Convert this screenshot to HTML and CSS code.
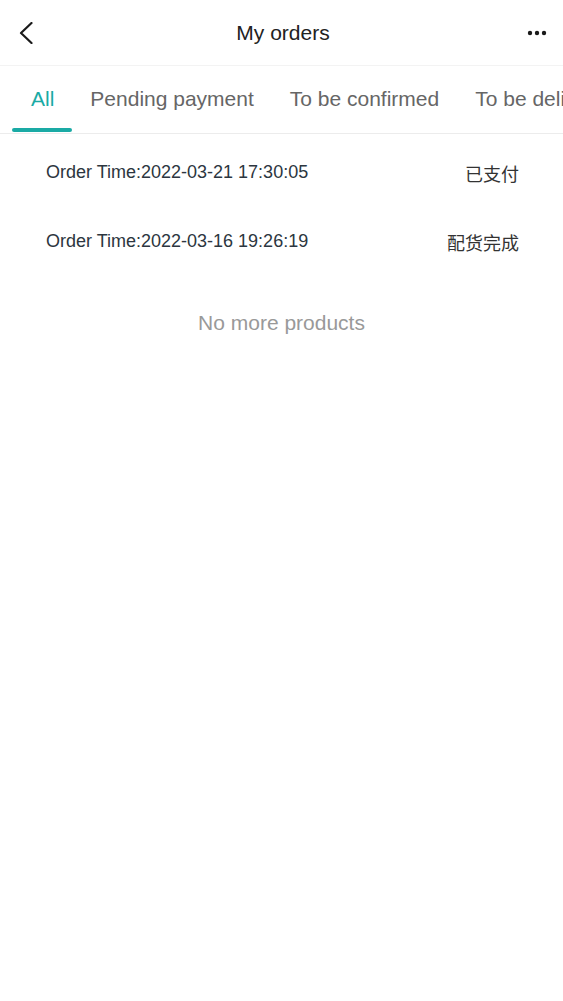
FILE: index.html
```html
<!DOCTYPE html>
<html lang="en">
<head>
<meta charset="utf-8">
<title>My orders</title>
<link rel="stylesheet" href="styles.css">
</head>
<body>
<div class="page">
  <header class="navbar">
    <button class="nav-btn back" aria-label="Back">
      <svg width="14" height="22" viewBox="0 0 14 22"><polyline points="12.5,1 2,11 12.5,21" fill="none" stroke="#1a1a1a" stroke-width="2.2" stroke-linecap="round" stroke-linejoin="round"/></svg>
    </button>
    <h1 class="nav-title">My orders</h1>
    <button class="nav-btn more" aria-label="More">
      <svg width="20" height="6" viewBox="0 0 20 6"><circle cx="3" cy="3" r="2.2" fill="#1a1a1a"/><circle cx="10" cy="3" r="2.2" fill="#1a1a1a"/><circle cx="17" cy="3" r="2.2" fill="#1a1a1a"/></svg>
    </button>
  </header>
  <nav class="tabs">
    <div class="tab active">All</div>
    <div class="tab">Pending payment</div>
    <div class="tab">To be confirmed</div>
    <div class="tab">To be delivered</div>
  </nav>
  <ul class="orders">
    <li class="order"><span class="order-time">Order Time:2022-03-21 17:30:05</span><span class="order-status">已支付</span></li>
    <li class="order"><span class="order-time">Order Time:2022-03-16 19:26:19</span><span class="order-status">配货完成</span></li>
  </ul>
  <p class="no-more">No more products</p>
</div>
</body>
</html>
```
FILE: styles.css
```css
* { box-sizing: border-box; }
html, body { margin: 0; padding: 0; background: #fff; }
body { font-family: "Liberation Sans", Arial, "Noto Sans CJK SC", sans-serif; width: 563px; overflow: hidden; }
.page { width: 563px; }
.navbar {
  height: 66px;
  display: flex;
  align-items: center;
  justify-content: space-between;
  border-bottom: 1px solid #f3f3f3;
  padding: 0 16px 0 19px;
}
.nav-btn { background: none; border: 0; padding: 0; display: flex; align-items: center; width: 30px; }
.nav-btn.back { justify-content: flex-start; }
.nav-btn.more { justify-content: flex-end; }
.nav-title { margin: 0; font-size: 21px; font-weight: normal; color: #222; }
.tabs {
  height: 68px;
  display: flex;
  padding-left: 13px;
  border-bottom: 1px solid #ececec;
  white-space: nowrap;
  overflow: hidden;
}
.tab {
  position: relative;
  padding: 0 18px 2px;
  font-size: 21px;
  color: #666;
  display: flex;
  align-items: center;
  flex: none;
}
.tab.active { color: #1aaaa5; }
.tab.active::after {
  content: "";
  position: absolute;
  left: -1px;
  right: 0;
  bottom: 1px;
  height: 4px;
  border-radius: 2px;
  background: #1aaaa5;
}
.orders { list-style: none; margin: 0; padding: 4px 0 0; }
.order {
  height: 69px;
  display: flex;
  align-items: center;
  justify-content: space-between;
  padding: 0 44px 0 46px;
}
.order-time { font-size: 18px; color: #2c3640; }
.order-status { font-family: "Noto Sans CJK SC", sans-serif; font-size: 18px; color: #333; padding-top: 1px; }
.no-more {
  margin: 0;
  padding-top: 34px;
  line-height: 26px;
  text-align: center;
  font-size: 21px;
  color: #999;
}
```
